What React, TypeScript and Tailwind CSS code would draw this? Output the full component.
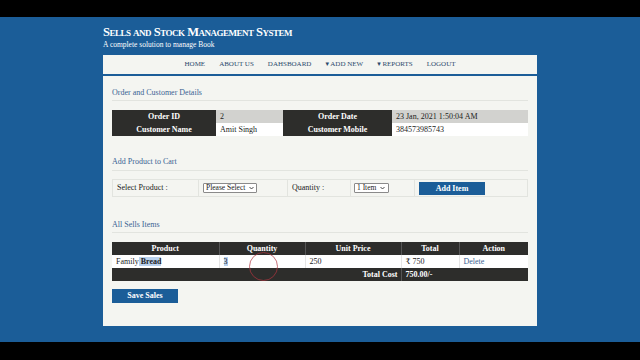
import React from "react";

const serif = { fontFamily: '"Liberation Serif", "DejaVu Serif", Georgia, serif' };

export default function App() {
  return (
    <div className="w-[640px] h-[360px] bg-black flex flex-col overflow-hidden" style={serif}>
      <div className="h-[17px] bg-black" />
      <div className="h-[325px] bg-[#1b5d98] flex flex-col pl-[103px] pr-[103px] relative">
        <div className="pt-[8px] h-[37px]">
          <div className="text-white text-[12.5px] leading-[15px] font-bold tracking-[-0.5px]" style={{ fontVariant: "small-caps" }}>
            Sells and Stock Management System
          </div>
          <div className="text-white text-[7.5px] leading-[9px]">A complete solution to manage Book</div>
        </div>
        <div className="mt-[1px] h-[19px] bg-[#f4f5f1] flex items-center justify-center gap-[14px] text-[7px] text-[#2c4a6c] uppercase">
          <span>Home</span>
          <span>About Us</span>
          <span>Dahsboard</span>
          <span>▾ Add New</span>
          <span>▾ Reports</span>
          <span>Logout</span>
        </div>
        <div className="mt-[2px] h-[250px] bg-[#f4f5f1] px-[9px] pt-[12px] relative">
          <div className="text-[8px] text-[#3b6393] leading-[10px]">Order and Customer Details</div>
          <div className="h-px bg-[#e2e4df] mt-[2px]" />
          <table className="mt-[9px] w-[416px] border-collapse text-[8px] leading-[13px]">
            <tbody>
              <tr className="h-[13px]">
                <td className="w-[104px] bg-[#2d2d2b] text-white font-bold text-center">Order ID</td>
                <td className="w-[67px] bg-[#d2d2cf] pl-[4px] text-[#222]">2</td>
                <td className="w-[109px] bg-[#2d2d2b] text-white font-bold text-center">Order Date</td>
                <td className="bg-[#d2d2cf] pl-[4px] text-[#222]">23 Jan, 2021 1:50:04 AM</td>
              </tr>
              <tr className="h-[13px]">
                <td className="bg-[#2d2d2b] text-white font-bold text-center">Customer Name</td>
                <td className="bg-white pl-[4px] text-[#222]">Amit Singh</td>
                <td className="bg-[#2d2d2b] text-white font-bold text-center">Customer Mobile</td>
                <td className="bg-white pl-[4px] text-[#222]">384573985743</td>
              </tr>
            </tbody>
          </table>

          <div className="mt-[21px] text-[8px] text-[#3b6393] leading-[10px]">Add Product to Cart</div>
          <div className="h-px bg-[#e2e4df] mt-[3px]" />
          <div className="mt-[8px] w-[416px] h-[18px] border border-[#e2e4df] flex text-[8px] leading-[10px] text-[#222]">
            <div className="w-[86px] border-r border-[#e2e4df] pl-[4px] pt-[3px]">Select Product :</div>
            <div className="w-[89px] border-r border-[#e2e4df] pl-[4px] pt-[3px]">
              <div className="w-[54px] h-[10px] border border-[#8a8a8a] rounded-[1px] bg-white flex items-center justify-between pl-[2px] pr-[2px] text-[7.5px] leading-[8px]">
                <span>Please Select</span>
                <svg width="5" height="4" viewBox="0 0 5 4"><path d="M0.5 1 L2.5 3 L4.5 1" stroke="#333" strokeWidth="0.9" fill="none" /></svg>
              </div>
            </div>
            <div className="w-[63px] border-r border-[#e2e4df] pl-[4px] pt-[3px]">Quantity :</div>
            <div className="w-[64px] border-r border-[#e2e4df] pl-[3px] pt-[3px]">
              <div className="w-[35px] h-[10px] border border-[#8a8a8a] rounded-[1px] bg-white flex items-center justify-between pl-[2px] pr-[3px] text-[7.5px] leading-[8px]">
                <span>1 Item</span>
                <svg width="5" height="4" viewBox="0 0 5 4"><path d="M0.5 1 L2.5 3 L4.5 1" stroke="#333" strokeWidth="0.9" fill="none" /></svg>
              </div>
            </div>
            <div className="flex-1 pl-[4px] pt-[2px]">
              <div className="w-[66px] h-[13px] bg-[#1b5d98] text-white font-bold text-[8px] flex items-center justify-center">Add Item</div>
            </div>
          </div>

          <div className="mt-[23px] text-[8px] text-[#3b6393] leading-[10px]">All Sells Items</div>
          <div className="h-px bg-[#e2e4df] mt-[2px]" />
          <table className="mt-[9px] w-[416px] border-collapse text-[8px] leading-[13px]">
            <tbody>
              <tr className="h-[13px] bg-[#2d2d2b] text-white font-bold text-center">
                <td className="w-[107px] border-r border-[#555]">Product</td>
                <td className="w-[86px] border-r border-[#555]">Quantity</td>
                <td className="w-[96px] border-r border-[#555]">Unit Price</td>
                <td className="w-[58px] border-r border-[#555]">Total</td>
                <td>Action</td>
              </tr>
              <tr className="h-[13px] bg-white text-[#222]">
                <td className="pl-[4px] border-r border-[#e5e5e5]">Family<span className="bg-[#b9d2ee] font-bold"> Bread</span></td>
                <td className="pl-[4px] border-r border-[#e5e5e5]"><span className="bg-[#b9d2ee]">3</span></td>
                <td className="pl-[4px] border-r border-[#e5e5e5]">250</td>
                <td className="pl-[4px] border-r border-[#e5e5e5]">₹ 750</td>
                <td className="pl-[4px] text-[#3b6393]">Delete</td>
              </tr>
              <tr className="h-[13px] bg-[#2d2d2b] text-white font-bold">
                <td colSpan={3} className="text-right pr-[3px] border-r border-[#555]">Total Cost</td>
                <td colSpan={2} className="pl-[4px]">750.00/-</td>
              </tr>
            </tbody>
          </table>

          <div className="mt-[8px] w-[66px] h-[14px] bg-[#1b5d98] text-white font-bold text-[8px] flex items-center justify-center">Save Sales</div>

          <div className="absolute left-[146px] top-[176px] w-[29px] h-[29px] rounded-full border-[1.5px] border-[#b0353f]/70" />
        </div>
      </div>
    </div>
  );
}
